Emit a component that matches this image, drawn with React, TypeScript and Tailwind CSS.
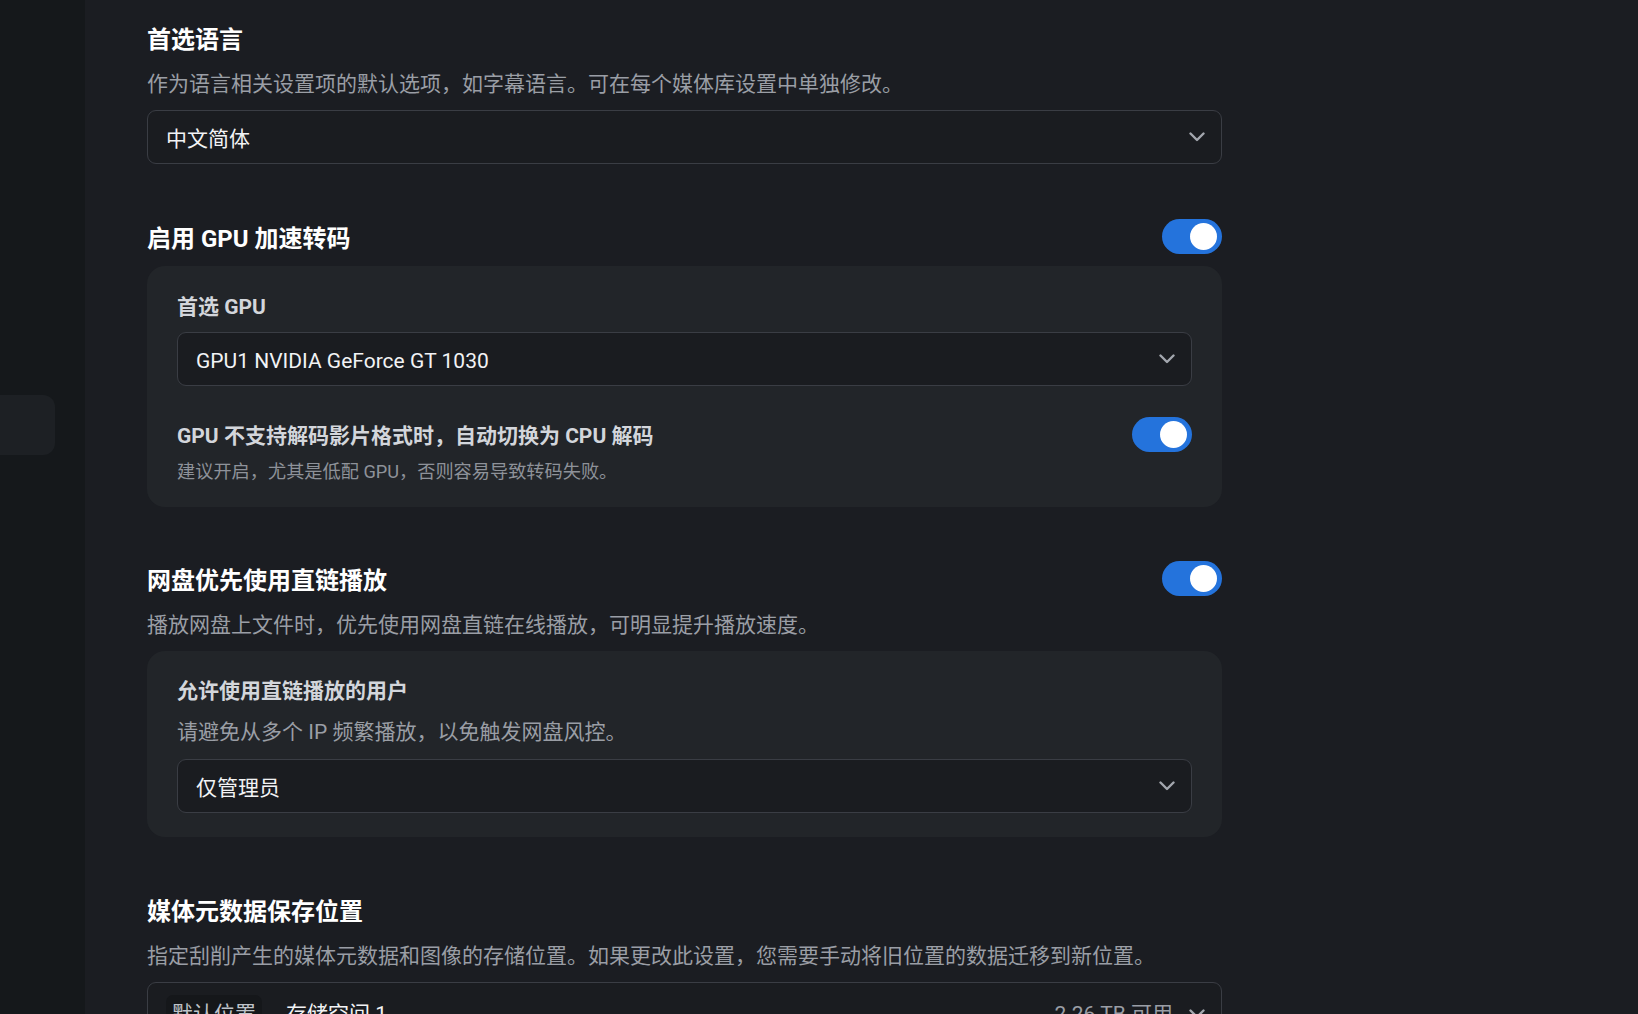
import React from "react";

const FONT = { fontFamily: 'Roboto, "Noto Sans CJK SC", sans-serif' };

function Chevron() {
  return (
    <svg width="16" height="10" viewBox="0 0 16 10" fill="none" className="shrink-0">
      <polyline points="1.5,1.5 8,8 14.5,1.5" stroke="#a3a7ae" strokeWidth="2.4" strokeLinecap="round" strokeLinejoin="round" />
    </svg>
  );
}

function Toggle() {
  return (
    <div className="relative h-[35px] w-[60px] shrink-0 rounded-full bg-[#2473dc]">
      <div className="absolute right-[5px] top-[4px] h-[27px] w-[27px] rounded-full bg-white" />
    </div>
  );
}

function Select({ children }: { children: React.ReactNode }) {
  return (
    <div className="flex h-[54px] items-center justify-between rounded-[9px] border border-[#3a3d44] bg-[#1a1c20] pl-[18px] pr-[16px]">
      <span className="pt-[3px] text-[21px] leading-[30px] text-[#f2f3f5]">{children}</span>
      <Chevron />
    </div>
  );
}

export default function App() {
  return (
    <div style={FONT} className="flex h-[1014px] w-full overflow-hidden bg-[#1b1d22]">
      <aside className="w-[85px] shrink-0 bg-[#15181b] pt-[395px]">
        <div className="h-[60px] w-[55px] rounded-r-[12px] bg-[#1d2024]" />
      </aside>
      <main className="flex-1 pl-[62px] pt-[24px]">
        <div className="w-[1075px]">
          {/* Section 1 */}
          <h2 className="text-[24px] font-bold leading-[32px] text-white">首选语言</h2>
          <p className="mt-[13px] text-[21px] leading-[30px] text-[#9a9ea5]">
            作为语言相关设置项的默认选项，如字幕语言。可在每个媒体库设置中单独修改。
          </p>
          <div className="mt-[11px]">
            <Select>中文简体</Select>
          </div>

          {/* Section 2 */}
          <div className="mt-[54px] flex h-[36px] items-center justify-between">
            <h2 className="pt-[5px] text-[24px] font-bold leading-[32px] text-white">启用 GPU 加速转码</h2>
            <Toggle />
          </div>
          <div className="mt-[12px] rounded-[18px] bg-[#222529] px-[30px] pb-[22px] pt-[25px]">
            <div className="pt-[1px] text-[21px] font-bold leading-[30px] text-[#d3d6db]">首选 GPU</div>
            <div className="mt-[10px]">
              <Select>GPU1 NVIDIA GeForce GT 1030</Select>
            </div>
            <div className="mt-[30px] flex h-[36px] items-center justify-between">
              <div className="pt-[3px] text-[21px] font-bold leading-[30px] text-[#d3d6db]">
                GPU 不支持解码影片格式时，自动切换为 CPU 解码
              </div>
              <Toggle />
            </div>
            <p className="mt-[7px] text-[18.2px] leading-[26px] text-[#8e9299]">
              建议开启，尤其是低配 GPU，否则容易导致转码失败。
            </p>
          </div>

          {/* Section 3 */}
          <div className="mt-[53px] flex h-[36px] items-center justify-between">
            <h2 className="pt-[5px] text-[24px] font-bold leading-[32px] text-white">网盘优先使用直链播放</h2>
            <Toggle />
          </div>
          <p className="mt-[14px] text-[21px] leading-[30px] text-[#9a9ea5]">
            播放网盘上文件时，优先使用网盘直链在线播放，可明显提升播放速度。
          </p>
          <div className="mt-[11px] rounded-[18px] bg-[#222529] px-[30px] pb-[24px] pt-[24px]">
            <div className="pt-[1px] text-[21px] font-bold leading-[30px] text-[#d3d6db]">允许使用直链播放的用户</div>
            <p className="mt-[11px] text-[21px] leading-[30px] text-[#9a9ea5]">
              请避免从多个 IP 频繁播放，以免触发网盘风控。
            </p>
            <div className="mt-[12px]">
              <Select>仅管理员</Select>
            </div>
          </div>

          {/* Section 4 */}
          <h2 className="mt-[59px] text-[24px] font-bold leading-[32px] text-white">媒体元数据保存位置</h2>
          <p className="mt-[13px] text-[21px] leading-[30px] text-[#9a9ea5]">
            指定刮削产生的媒体元数据和图像的存储位置。如果更改此设置，您需要手动将旧位置的数据迁移到新位置。
          </p>
          <div className="mt-[11px] flex h-[64px] items-center justify-between rounded-[9px] border border-[#3a3d44] bg-[#1a1c20] pl-[18px] pr-[16px]">
            <div className="flex items-center gap-[24px]">
              <span className="rounded-[7px] bg-[#15171a] px-[6px] py-[4px] text-[21px] leading-[30px] text-[#bfc3c9]">默认位置</span>
              <span className="text-[21px] leading-[30px] text-[#f2f3f5]">存储空间 1</span>
            </div>
            <div className="flex items-center gap-[16px]">
              <span className="text-[21px] leading-[30px] text-[#9a9ea5]">2.26 TB 可用</span>
              <Chevron />
            </div>
          </div>
        </div>
      </main>
    </div>
  );
}
